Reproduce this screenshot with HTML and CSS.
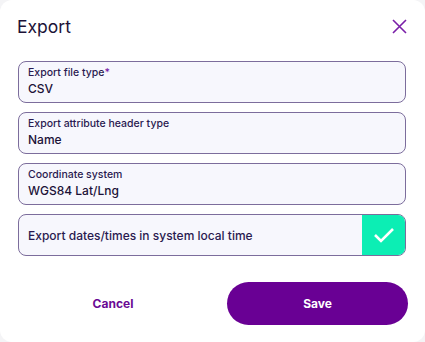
FILE: index.html
```html
<!DOCTYPE html>
<html>
<head>
    <title>Export</title>
    <link rel="stylesheet" href="styles.css">
</head>
<body>
    <div class="dialog">
        <div class="dialog-header">
            <h1 class="dialog-title">Export</h1>
            <button class="close-btn" type="button">
                <svg width="15" height="15" viewBox="0 0 15 15">
                    <path d="M1 1 L14 14 M14 1 L1 14" stroke="#7a1fa8" stroke-width="1.6" fill="none"/>
                </svg>
            </button>
        </div>

        <div class="fields">
            <div class="field">
                <span class="field-label">Export file type<span class="req">*</span></span>
                <span class="field-value">CSV</span>
            </div>
            <div class="field">
                <span class="field-label">Export attribute header type</span>
                <span class="field-value">Name</span>
            </div>
            <div class="field">
                <span class="field-label">Coordinate system</span>
                <span class="field-value">WGS84 Lat/Lng</span>
            </div>
            <div class="field field-check">
                <span class="check-text">Export dates/times in system local time</span>
                <span class="check-box">
                    <svg width="22" height="16" viewBox="0 0 22 16">
                        <path d="M2 8 L8 14 L20 2" stroke="#ffffff" stroke-width="2.6" fill="none"/>
                    </svg>
                </span>
            </div>
        </div>

        <div class="actions">
            <button class="btn btn-cancel" type="button">Cancel</button>
            <button class="btn btn-save" type="button">Save</button>
        </div>
    </div>
</body>
</html>
```

FILE: styles.css
```css
html, body {
    margin: 0;
    padding: 0;
    background-color: #f4f4f6;
}

body {
    font-family: Inter, "Noto Sans", sans-serif;
    color: #1c1238;
}

.dialog {
    width: 425px;
    height: 342px;
    box-sizing: border-box;
    background-color: #ffffff;
    border-radius: 12px;
    padding: 0 19px 0 18px;
}

.dialog-header {
    display: flex;
    align-items: center;
    justify-content: space-between;
    height: 52px;
}

.dialog-title {
    margin: 0 0 0 -1px;
    font-size: 17.5px;
    font-weight: 400;
    color: #1c1238;
}

.close-btn {
    background: none;
    border: none;
    padding: 0;
    margin-right: -1px;
    display: flex;
}

.fields {
    display: flex;
    flex-direction: column;
    gap: 9px;
    margin-top: 9px;
}

.field {
    height: 42px;
    box-sizing: border-box;
    border: 1.5px solid #7c6d9c;
    border-radius: 8px;
    background-color: #f7f7fd;
    padding: 3px 9px 0;
    display: flex;
    flex-direction: column;
}

.field-label {
    font-size: 10.5px;
    line-height: 15px;
    font-weight: 500;
    color: #2a1a50;
}

.req {
    color: #7a1fa8;
}

.field-value {
    font-size: 12px;
    line-height: 18px;
    font-weight: 500;
    color: #1c1238;
}

.field-check {
    flex-direction: row;
    align-items: center;
    justify-content: space-between;
    padding: 0 0 0 9px;
    overflow: hidden;
}

.check-text {
    font-size: 12px;
    font-weight: 500;
    color: #2a1a50;
}

.check-box {
    width: 43px;
    height: 100%;
    background-color: #0ceeb4;
    display: flex;
    align-items: center;
    justify-content: center;
}

.actions {
    display: flex;
    gap: 19px;
    margin-top: 26px;
    margin-right: -2px;
}

.btn {
    height: 43px;
    border: none;
    border-radius: 22px;
    font-family: Inter, "Noto Sans", sans-serif;
    font-size: 12px;
    font-weight: 700;
}

.btn-cancel {
    flex: 1;
    background: none;
    color: #6a0a94;
}

.btn-save {
    width: 181px;
    background-color: #690094;
    color: #ffffff;
}
```
